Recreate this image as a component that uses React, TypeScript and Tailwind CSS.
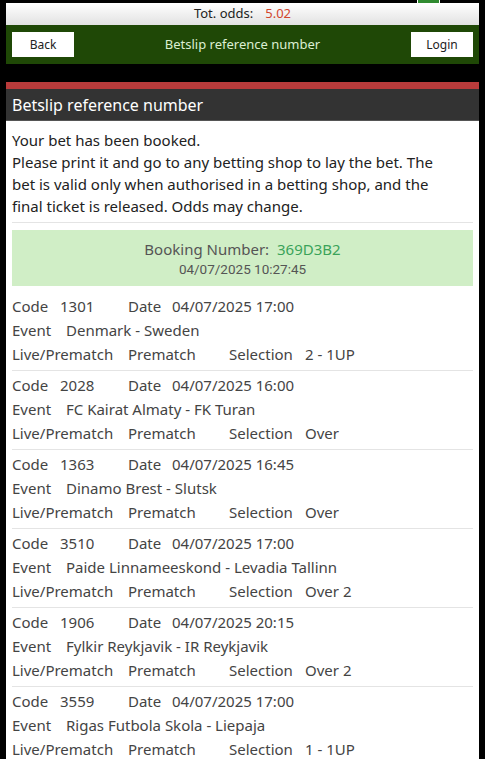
import React from "react";

type Bet = {
  code: string;
  date: string;
  event: string;
  mode: string;
  selection: string;
};

const BETS: Bet[] = [
  { code: "1301", date: "04/07/2025 17:00", event: "Denmark - Sweden", mode: "Prematch", selection: "2 - 1UP" },
  { code: "2028", date: "04/07/2025 16:00", event: "FC Kairat Almaty - FK Turan", mode: "Prematch", selection: "Over" },
  { code: "1363", date: "04/07/2025 16:45", event: "Dinamo Brest - Slutsk", mode: "Prematch", selection: "Over" },
  { code: "3510", date: "04/07/2025 17:00", event: "Paide Linnameeskond - Levadia Tallinn", mode: "Prematch", selection: "Over 2" },
  { code: "1906", date: "04/07/2025 20:15", event: "Fylkir Reykjavik - IR Reykjavik", mode: "Prematch", selection: "Over 2" },
  { code: "3559", date: "04/07/2025 17:00", event: "Rigas Futbola Skola - Liepaja", mode: "Prematch", selection: "1 - 1UP" },
];

const font = "font-['Noto_Sans',sans-serif]";

export default function App() {
  return (
    <div className={`w-[485px] h-[759px] overflow-hidden bg-black ${font}`}>
      <div className="relative mx-[6px] pt-[3px]">
        {/* bit of the toolbar above */}
        <div className="absolute right-[39px] top-0 h-[3px] w-[23px] border-x border-white bg-[#2f8a2f]" />
        <div className="flex h-[22px] items-center justify-center gap-3 bg-gradient-to-b from-white to-[#e2e2e2] text-[13px] text-[#222]">
          <span>Tot. odds:</span>
          <span className="text-[#d2452c]">5.02</span>
        </div>
        <div className="flex h-[39px] items-center justify-between bg-[#1f4806] px-[6px]">
          <button className="h-[25px] w-[62px] bg-white text-[12px] text-[#222]">Back</button>
          <span className="text-[13px] text-[#dcefd2]">Betslip reference number</span>
          <button className="h-[25px] w-[62px] bg-white text-[12px] text-[#222]">Login</button>
        </div>
      </div>

      <div className="mx-[6px] mt-[18px]">
        <div className="h-[7px] bg-[#b93b3b]" />
        <div className="flex h-[32px] items-center border-b border-[#555] bg-[#333] px-[6px] text-[16px] text-white">
          Betslip reference number
        </div>
        <div className="bg-white px-[6px] pt-[8px]">
          <p className="pb-[5px] pr-[28px] text-[15px] leading-[22px] text-[#222]">
            Your bet has been booked.
            <br />
            Please print it and go to any betting shop to lay the bet. The bet is valid only when authorised in a
            betting shop, and the final ticket is released. Odds may change.
          </p>
          <div className="border-t border-[#e4e4e4] pt-[7px]">
            <div className="flex h-[56px] flex-col items-center justify-center bg-[#d0eec6]">
              <div className="text-[15px] leading-[22px] text-[#555]">
                Booking Number: <span className="ml-1 text-[#3aa35a]">369D3B2</span>
              </div>
              <div className="font-['Roboto',sans-serif] text-[13.5px] leading-[18px] text-[#555]">
                04/07/2025 10:27:45
              </div>
            </div>
          </div>
          <div className="pt-[8px]">
            {BETS.map((b, i) => (
              <div key={b.code} className={`pb-[4px] ${i > 0 ? "border-t border-[#e4e4e4] pt-[2px]" : ""}`}>
                <div className="flex h-[24px] items-center text-[15px] text-[#444]">
                  <span className="w-[48px]">Code</span>
                  <span className="w-[68px]">{b.code}</span>
                  <span className="w-[44px]">Date</span>
                  <span>{b.date}</span>
                </div>
                <div className="flex h-[24px] items-center text-[15px] text-[#444]">
                  <span className="w-[54px]">Event</span>
                  <span>{b.event}</span>
                </div>
                <div className="flex h-[24px] items-center text-[15px] text-[#444]">
                  <span className="w-[116px]">Live/Prematch</span>
                  <span className="w-[101px]">{b.mode}</span>
                  <span className="w-[76px]">Selection</span>
                  <span>{b.selection}</span>
                </div>
              </div>
            ))}
          </div>
        </div>
      </div>
    </div>
  );
}
